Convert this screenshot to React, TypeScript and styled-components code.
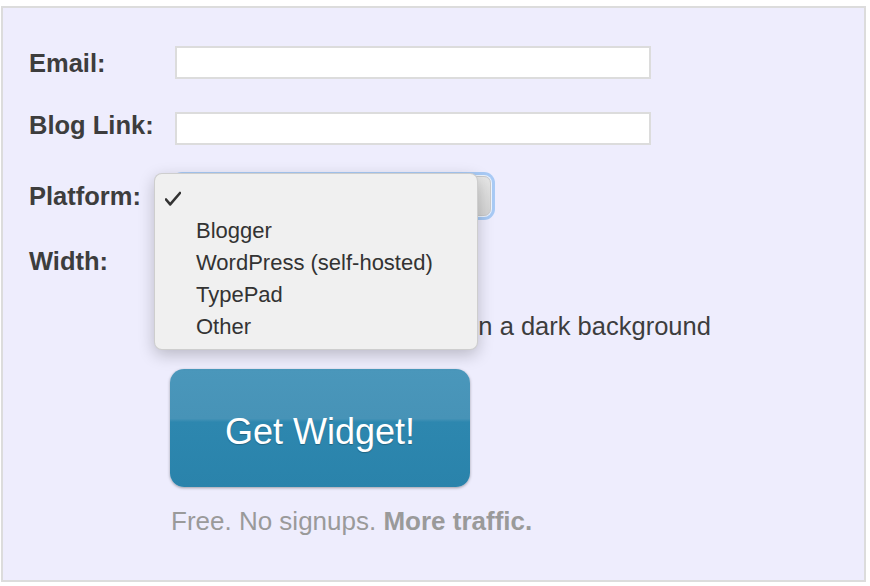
import React from "react";
import styled, { createGlobalStyle } from "styled-components";

const GlobalStyle = createGlobalStyle`
  html, body {
    margin: 0;
    padding: 0;
    background: #ffffff;
  }
  body {
    font-family: "Liberation Sans", Arial, sans-serif;
    color: #3d3d3d;
  }
`;

const Panel = styled.div`
  box-sizing: border-box;
  width: 865px;
  height: 576px;
  margin: 6px 0 0 1px;
  padding: 38px 0 0 26px;
  background: #eeedfd;
  border: 2px solid #dcdcdc;
`;

const Row = styled.div<{ $gap: number }>`
  display: grid;
  grid-template-columns: 146px 1fr;
  align-items: center;
  margin-top: ${(p) => p.$gap}px;
`;

// $lift nudges a label up without making its row any taller
const Label = styled.label<{ $lift?: number }>`
  font-size: 25.5px;
  font-weight: 700;
  color: #3d3d3d;
  padding-top: 2px;
  margin-top: ${(p) => -(p.$lift || 0) * 2}px;
`;

const TextInput = styled.input<{ $w: number }>`
  box-sizing: border-box;
  width: ${(p) => p.$w}px;
  height: 33px;
  margin: 0;
  border: 2px solid #dcdcdc;
  background: #ffffff;
  outline: none;
  font: inherit;
  font-size: 16px;
`;

const SelectWrap = styled.div`
  position: relative;
  width: 316px;
  height: 40px;
`;

const SelectBox = styled.div`
  box-sizing: border-box;
  width: 100%;
  height: 100%;
  border: 1px solid #c9c9c9;
  border-radius: 7px;
  background: linear-gradient(#e6e6e6, #d3d3d3);
  box-shadow: 0 0 0 1px #ecf3fc, 0 0 0 4px #a8caf5;
`;

const Menu = styled.ul`
  position: absolute;
  top: -3px;
  left: -21px;
  box-sizing: border-box;
  width: 324px;
  height: 177px;
  margin: 0;
  padding: 9px 0 0 0;
  list-style: none;
  background: #f0f0f0;
  border: 1px solid rgba(0, 0, 0, 0.14);
  border-radius: 8px;
  box-shadow: 0 5px 16px rgba(0, 0, 0, 0.22);
  z-index: 5;
`;

const MenuItem = styled.li`
  position: relative;
  height: 32px;
  line-height: 32px;
  padding-left: 41px;
  font-size: 22px;
  color: #333333;
  white-space: nowrap;
`;

const Check = styled.svg`
  position: absolute;
  left: 10px;
  top: 8px;
`;

const CheckRow = styled.div`
  display: flex;
  align-items: center;
  gap: 14px;
  font-size: 25.5px;
  color: #3d3d3d;
  white-space: nowrap;
`;

const Box = styled.span`
  box-sizing: border-box;
  width: 14px;
  height: 14px;
  margin-left: 16px;
  border: 1px solid #aaaaaa;
  border-radius: 3px;
  background: #ffffff;
`;

const Actions = styled.div`
  margin: 28px 0 0 141px;
`;

const WidgetButton = styled.button`
  display: block;
  width: 300px;
  height: 118px;
  margin: 0;
  padding: 8px 0 0;
  border: none;
  border-radius: 14px;
  background: linear-gradient(
    to bottom,
    #4a97bb 0%,
    #4793b7 42%,
    #2d87af 45%,
    #2a83ab 100%
  );
  box-shadow: 0 1px 3px rgba(0, 0, 0, 0.35);
  color: #ffffff;
  font-family: "Liberation Sans", Arial, sans-serif;
  font-size: 36px;
  text-shadow: 0 1px 1px rgba(0, 0, 0, 0.25);
  cursor: pointer;
`;

const Note = styled.p`
  margin: 19px 0 0 1px;
  font-size: 26px;
  color: #9a9a9a;
  b {
    font-weight: 700;
  }
`;

const options = ["", "Blogger", "WordPress (self-hosted)", "TypePad", "Other"];

export default function App() {
  return (
    <>
      <GlobalStyle />
      <Panel>
        <Row $gap={0}>
          <Label htmlFor="email">Email:</Label>
          <TextInput id="email" $w={476} />
        </Row>
        <Row $gap={33}>
          <Label htmlFor="blog" $lift={4}>Blog Link:</Label>
          <TextInput id="blog" $w={476} />
        </Row>
        <Row $gap={31}>
          <Label $lift={1}>Platform:</Label>
          <SelectWrap>
            <SelectBox />
            <Menu>
              {options.map((o, i) => (
                <MenuItem key={i}>
                  {i === 0 && (
                    <Check width="16" height="16" viewBox="0 0 16 16">
                      <path
                        d="M1 8.5 L5.2 13.4 L15 2"
                        fill="none"
                        stroke="#333"
                        strokeWidth="2.6"
                        strokeLinecap="round"
                        strokeLinejoin="round"
                      />
                    </Check>
                  )}
                  {o}
                </MenuItem>
              ))}
            </Menu>
          </SelectWrap>
        </Row>
        <Row $gap={28}>
          <Label>Width:</Label>
          <TextInput $w={100} />
        </Row>
        <Row $gap={35}>
          <span />
          <CheckRow>
            <Box />
            Widget will be shown on a dark background
          </CheckRow>
        </Row>
        <Actions>
          <WidgetButton>Get Widget!</WidgetButton>
          <Note>
            Free. No signups. <b>More traffic.</b>
          </Note>
        </Actions>
      </Panel>
    </>
  );
}
